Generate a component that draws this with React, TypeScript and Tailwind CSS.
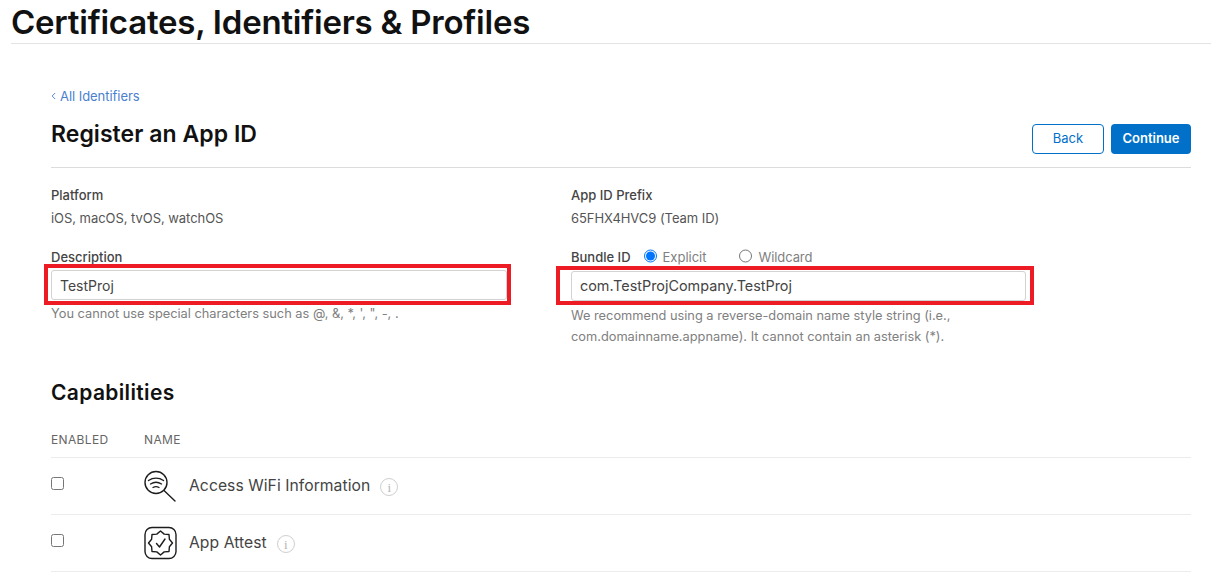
import { ChevronLeft } from 'lucide-react';

const WifiSearchIcon = () => (
  <svg width="34" height="34" viewBox="0 0 34 34" fill="none" stroke="#1d1d1f" strokeWidth="1.4" strokeLinecap="round">
    <circle cx="12" cy="13.500" r="11" />
    <path d="M20 21.500l11 10.500" />
    <path d="M4.500 11.500c4.500-3 10.500-3 15 0" />
    <path d="M6.500 15c3.500-2.200 7.500-2.200 11 0" />
    <path d="M9 18.500c2-1.200 4-1.200 6 0" />
  </svg>
);

// 8 point rosette around the tick
const rosette = Array.from({ length: 16 }, (_, i) => {
  const r = i % 2 === 0 ? 12 : 9.6;
  const a = (i * Math.PI) / 8 - Math.PI / 2;
  return `${(16.5 + r * Math.cos(a)).toFixed(1)},${(17 + r * Math.sin(a)).toFixed(1)}`;
}).join(' ');

const AttestIcon = () => (
  <svg width="34" height="34" viewBox="0 0 34 34" fill="none" stroke="#1d1d1f" strokeWidth="1.4" strokeLinecap="round" strokeLinejoin="round">
    <rect x="1" y="1.500" width="31" height="31" rx="7" />
    <polygon points={rosette} />
    <path d="M12.500 17.500l3 3.500 5.500-8" />
  </svg>
);

const InfoIcon = () => (
  <span className="flex h-[18px] w-[18px] items-center justify-center rounded-full border border-[#cfcfcf] font-['Liberation_Serif',serif] text-[13px] leading-none text-[#b5b5b5]">
    i
  </span>
);

const capabilities = [
  { name: 'Access WiFi Information', icon: <WifiSearchIcon /> },
  { name: 'App Attest', icon: <AttestIcon /> },
];

const App = () => {
  return (
    <div className="h-[579px] w-[1211px] overflow-hidden bg-white font-['Inter',sans-serif] text-[#111111]">
      <div className="ml-[11px] h-[44px] border-b border-[#e3e3e3]">
        <h1 className="text-[33px] font-semibold leading-[45px] tracking-[-0.23px]">Certificates, Identifiers &amp; Profiles</h1>
      </div>

      <div className="ml-[51px] mr-[20px] pt-[44px]">
        <a className="flex h-[16px] -translate-y-[0.5px] items-center text-[13px] leading-[16px] tracking-[-0.05px] text-[#4a7fd0]">
          <ChevronLeft size={11} strokeWidth={2} className="-ml-[3px] mr-[1px]" />
          All Identifiers
        </a>

        <div className="mt-[15px] flex h-[49px] items-start justify-between border-b border-[#dcdcdc]">
          <h2 className="text-[23px] font-semibold leading-[30px] tracking-[0.05px]">Register an App ID</h2>
          <div className="mt-[5px] flex gap-[7px]">
            <button className="h-[30px] w-[72px] rounded-[4px] border border-[#0070c9] text-[13px] text-[#0070c9]">Back</button>
            <button className="h-[30px] w-[80px] rounded-[4px] bg-[#0070c9] text-[13px] font-semibold text-white">Continue</button>
          </div>
        </div>

        <div className="mt-[19px] grid grid-cols-[520px_1fr]">
          <div>
            <div className="text-[13px] font-medium leading-[16px] text-[#444444]">Platform</div>
            <div className="mt-[7px] text-[13px] leading-[16px] tracking-[-0.05px] text-[#555555]">iOS, macOS, tvOS, watchOS</div>
            <div className="mt-[23px] text-[13px] font-medium leading-[16px] text-[#444444]">Description</div>
            <div className="relative mt-[5px] w-[456px]">
              <div className="flex h-[30px] items-center rounded-[3px] border border-[#d2d2d2] px-[8px] text-[14px] text-[#444444]">TestProj</div>
              <div className="pointer-events-none absolute -left-[7px] -right-[4px] -top-[6px] h-[41px] border-[4px] border-[#ed1c24]" />
            </div>
            <p className="mt-[4px] text-[12.8px] leading-[20px] text-[#808080]">You cannot use special characters such as @, &amp;, *, ', ", -, .</p>
          </div>

          <div>
            <div className="text-[13px] font-medium leading-[16px] text-[#444444]">App ID Prefix</div>
            <div className="mt-[7px] text-[13px] leading-[16px] tracking-[-0.05px] text-[#555555]">65FHX4HVC9 (Team ID)</div>
            <div className="mt-[23px] flex h-[16px] items-center text-[13px] leading-[16px]">
              <span className="font-medium text-[#444444]">Bundle ID</span>
              <span className="ml-[13px] flex h-[13px] w-[13px] -translate-y-[1.5px] items-center justify-center rounded-full border border-[#0075ff]">
                <span className="h-[9px] w-[9px] rounded-full bg-[#0075ff]" />
              </span>
              <span className="ml-[6px] text-[#808080]">Explicit</span>
              <span className="ml-[32px] h-[13px] w-[13px] -translate-y-[1.5px] rounded-full border border-[#767676]" />
              <span className="ml-[7px] tracking-[-0.1px] text-[#808080]">Wildcard</span>
            </div>
            <div className="relative mt-[6px] w-[455px]">
              <div className="flex h-[30px] items-center rounded-[3px] border border-[#d2d2d2] px-[8px] text-[14.400px] text-[#444444]">com.TestProjCompany.TestProj</div>
              <div className="pointer-events-none absolute -left-[15px] -right-[8px] -top-[5px] h-[39px] border-[4px] border-[#ed1c24]" />
            </div>
            <p className="mt-[4px] w-[420px] text-[12.8px] leading-[21px] text-[#808080]">We recommend using a reverse-domain name style string (i.e., com.domainname.appname). It cannot contain an asterisk (*).</p>
          </div>
        </div>

        <h3 className="mt-[32px] text-[21px] font-semibold leading-[28px] tracking-[0.35px]">Capabilities</h3>

        <div className="mt-[25px] flex h-[26px] border-b border-[#ececec] text-[12px] leading-[16px] tracking-[0.35px] text-[#666666]">
          <span className="w-[93px]">ENABLED</span>
          <span>NAME</span>
        </div>

        {capabilities.map((cap) => (
          <div key={cap.name} className="flex h-[57px] items-center border-b border-[#ececec]">
            <input type="checkbox" className="h-[13px] w-[13px] -translate-y-[3px]" />
            <div className="ml-[80px] flex items-center">
              {cap.icon}
              <span className="ml-[11px] text-[15.700px] tracking-[0.05px] text-[#444444]">{cap.name}</span>
              <span className="ml-[10px] translate-y-[1px]"><InfoIcon /></span>
            </div>
          </div>
        ))}
      </div>
    </div>
  );
};

export default App;
